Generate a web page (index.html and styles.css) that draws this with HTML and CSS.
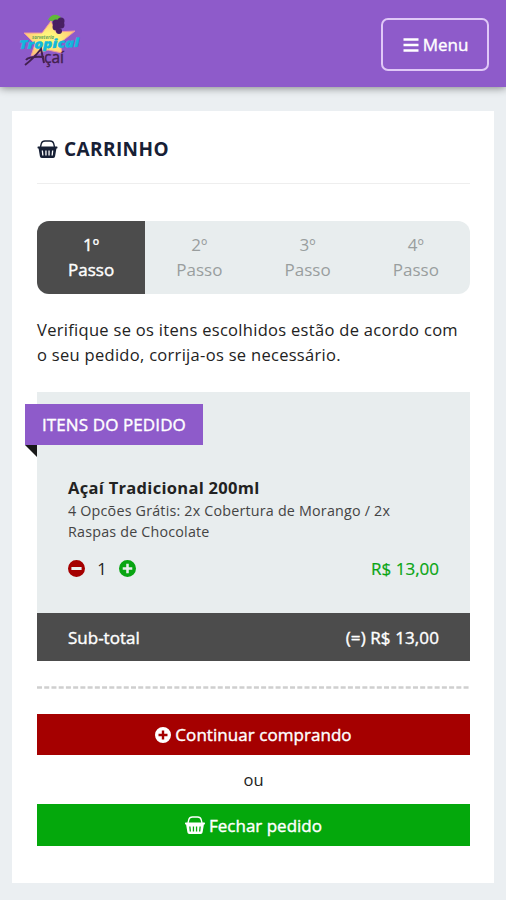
FILE: index.html
```html
<!DOCTYPE html>
<html lang="pt-BR">
<head>
<meta charset="utf-8">
<title>Carrinho</title>
<link rel="stylesheet" href="styles.css">
</head>
<body>
<svg class="defs" width="0" height="0" aria-hidden="true">
  <symbol id="basket" viewBox="0 0 20 18">
    <path d="M3 7 3.800 3.600Q4.500 1 7.500 1h5Q15.500 1 16.200 3.600L17 7" fill="none" stroke="currentColor" stroke-width="1.400"/>
    <path fill="currentColor" fill-rule="evenodd" d="M.6 6.500h18.800q.6 0 .6 1t-.6 1h-.5l-1.300 7.800q-.2 1.700-1.900 1.700H4.300q-1.700 0-1.900-1.700L1.100 8.500H.6q-.6 0-.6-1t.6-1zM4.200 10.500l.5 5h1.300l-.5-5zM7.800 10.500v5h1.300v-5zM10.900 10.500v5h1.300v-5zM14.500 10.500l-.5 5h1.300l.5-5z"/>
  </symbol>
  <symbol id="plus" viewBox="0 0 16 16">
    <path fill="currentColor" fill-rule="evenodd" d="M8 0a8 8 0 1 1 0 16A8 8 0 0 1 8 0zM6.800 3.500v3.300H3.500v2.400h3.300v3.300h2.400V9.200h3.300V6.800H9.200V3.500z"/>
  </symbol>
  <symbol id="minus" viewBox="0 0 16 16">
    <path fill="currentColor" fill-rule="evenodd" d="M8 0a8 8 0 1 1 0 16A8 8 0 0 1 8 0zM3.200 6.600v2.800h9.600V6.600z"/>
  </symbol>
</svg>
<header class="topbar">
  <svg class="logo" viewBox="0 0 64 60" role="img" aria-label="Tropical Açaí">
    <defs>
      <radialGradient id="star"><stop offset=".3" stop-color="#fff47c"/><stop offset="1" stop-color="#ffc878"/></radialGradient>
    </defs>
    <path d="M34 8 39 19 58 18 43 30 45 40 31 37 14 43 18 31 7 20 25 20Z" fill="url(#star)" stroke="#ee9a9b" stroke-width="1"/>
    <path d="M31 7Q34 1 40 2L44 4 39 9Z" fill="#61b83b"/>
    <g fill="#482063"><circle cx="39" cy="10" r="3.500"/><circle cx="44" cy="8" r="3.500"/><circle cx="39" cy="14" r="3.500"/><circle cx="44" cy="12" r="3.500"/><circle cx="42" cy="18" r="3"/></g>
    <text class="logo-small" x="15" y="25.500" textLength="22" lengthAdjust="spacingAndGlyphs">sorveteria</text>
    <text class="logo-name" x="2" y="35" textLength="60" lengthAdjust="spacingAndGlyphs" transform="rotate(-2 32 30)">Tropical</text>
    <path d="M8 52Q16 46 24 36L27 50M9 47Q12 43 27 44" fill="none" stroke="#43204f" stroke-width="2"/>
    <text class="logo-acai" x="27" y="50" textLength="20" lengthAdjust="spacingAndGlyphs">çaí</text>
  </svg>
  <button class="menu"><svg width="16" height="14" viewBox="0 0 16 14"><path d="M.5 1.500h15M.5 7h15M.5 12.500h15" stroke="currentColor" stroke-width="2.300"/></svg><span>Menu</span></button>
</header>
<main class="card">
  <h1 class="title"><svg width="21" height="18"><use href="#basket"/></svg><span>CARRINHO</span></h1>
  <ol class="steps">
    <li class="active">1º<br>Passo</li><li>2º<br>Passo</li><li>3º<br>Passo</li><li>4º<br>Passo</li>
  </ol>
  <p class="intro">Verifique se os itens escolhidos estão de acordo com<br>o seu pedido, corrija-os se necessário.</p>
  <section class="order">
    <h2 class="ribbon"><span>ITENS DO PEDIDO</span></h2>
    <div class="item">
      <h3><span>Açaí Tradicional 200ml</span></h3>
      <p class="options">4 Opcões Grátis: 2x Cobertura de Morango / 2x<br>Raspas de Chocolate</p>
      <div class="row">
        <div class="qty"><svg class="red" width="17" height="17"><use href="#minus"/></svg><span>1</span><svg class="green" width="17" height="17"><use href="#plus"/></svg></div>
        <span class="price">R$ 13,00</span>
      </div>
    </div>
    <div class="subtotal"><span>Sub-total</span><span class="total">(=) R$ 13,00</span></div>
  </section>
  <svg class="dash" width="433" height="3"><path d="M0 1.500h433" stroke="#cfcfcf" stroke-width="2.600" stroke-dasharray="5 2.230"/></svg>
  <button class="action continue"><svg width="16" height="16"><use href="#plus"/></svg><span>Continuar comprando</span></button>
  <p class="or">ou</p>
  <button class="action finish"><svg width="20" height="18"><use href="#basket"/></svg><span>Fechar pedido</span></button>
</main>
</body>
</html>
```
FILE: styles.css
```css
* { box-sizing: border-box; }
body { margin: 0; min-height: 900px; background: #ebeff2; color: #222; font-family: "Open Sans", sans-serif; font-size: 16.500px; }
h1, h2, h3, p, ol { margin: 0; padding: 0; }
button { font: inherit; border: 0; color: #fff; }
svg { display: block; flex: none; }
.defs { position: absolute; }
.topbar { height: 87px; padding: 0 17px; display: flex; align-items: center; justify-content: space-between; background: #8e5bca; box-shadow: 0 1px 8px #0007; }
.logo { width: 64px; height: 60px; margin-top: -1px; }
.logo-small { font: italic bold 5px "Open Sans", sans-serif; fill: #6aa55c; }
.logo-name { font: italic 800 12px "Open Sans", sans-serif; fill: #12b8dc; stroke: #12b8dc; stroke-width: .4; }
.logo-acai { font: 17px "Open Sans", sans-serif; fill: #43204f; stroke: #43204f; stroke-width: .4; }
.menu { width: 108px; height: 53px; margin-top: 2px; display: flex; align-items: center; justify-content: center; gap: 4px; border: 2px solid #e0c8f7; border-radius: 7px; background: none; font-size: 17px; padding: 0 0 0 1px; }
.menu span, .active, .ribbon, .subtotal, .action span { -webkit-text-stroke: .4px currentColor; }
.card { width: 482px; height: 772px; margin: 24px 0 0 12px; padding: 0 24px 0 25px; background: #fff; }
.title { height: 73px; padding-top: 3px; display: flex; align-items: center; gap: 6px; border-bottom: 1px solid #eee; color: #172035; font-size: 19px; font-weight: 700; letter-spacing: .4px; }
.steps { height: 73px; margin-top: 37px; display: grid; grid-template-columns: repeat(4, 1fr); list-style: none; overflow: hidden; border-radius: 12px; background: #e8edee; color: #999e9e; text-align: center; font-size: 17px; line-height: 24.500px; }
.steps li { padding-top: 12px; }
.steps .active { background: #4c4c4c; color: #fff; }
.intro { height: 49px; margin-top: 24px; line-height: 24.500px; letter-spacing: .3px; white-space: nowrap; }
.order { height: 269px; margin-top: 25px; padding-top: 12px; display: flex; flex-direction: column; background: #e8edee; }
.ribbon { position: relative; width: 178px; height: 41px; margin-left: -12px; padding-left: 17px; line-height: 41px; background: #8e5bca; color: #fff; font-size: 17px; font-weight: 400; letter-spacing: .1px; white-space: nowrap; }
.ribbon::after { content: ""; position: absolute; left: 0; top: 41px; border-top: 12px solid #191919; border-left: 12px solid transparent; }
.item { flex: 1; padding: 31px 31px 0; }
.item h3 { font-size: 16.500px; line-height: 24px; letter-spacing: .3px; }
.options { margin-top: 0; font-size: 14.300px; line-height: 21px; letter-spacing: .2px; color: #444; white-space: nowrap; }
.row { margin-top: 14px; height: 24px; display: flex; align-items: center; justify-content: space-between; }
.qty { display: flex; align-items: center; }
.qty span { width: 34px; text-align: center; }
.red { color: #a50000; }
.green, .price { color: #08a512; }
.price { font-size: 17px; -webkit-text-stroke: .2px currentColor; }
.subtotal { height: 48px; padding: 0 31px; display: flex; align-items: center; justify-content: space-between; background: #4c4c4c; color: #fff; font-size: 17px; }
.total { letter-spacing: .1px; }
.dash { margin-top: 25px; }
.action { width: 433px; height: 41px; padding: 0; display: flex; align-items: center; justify-content: center; gap: 4px; font-size: 17px; }
.continue { margin-top: 25px; background: #a50000; }
.continue span { letter-spacing: .05px; }
.finish { height: 42px; background: #04a80c; }
.or { height: 49px; line-height: 49px; text-align: center; }
```
